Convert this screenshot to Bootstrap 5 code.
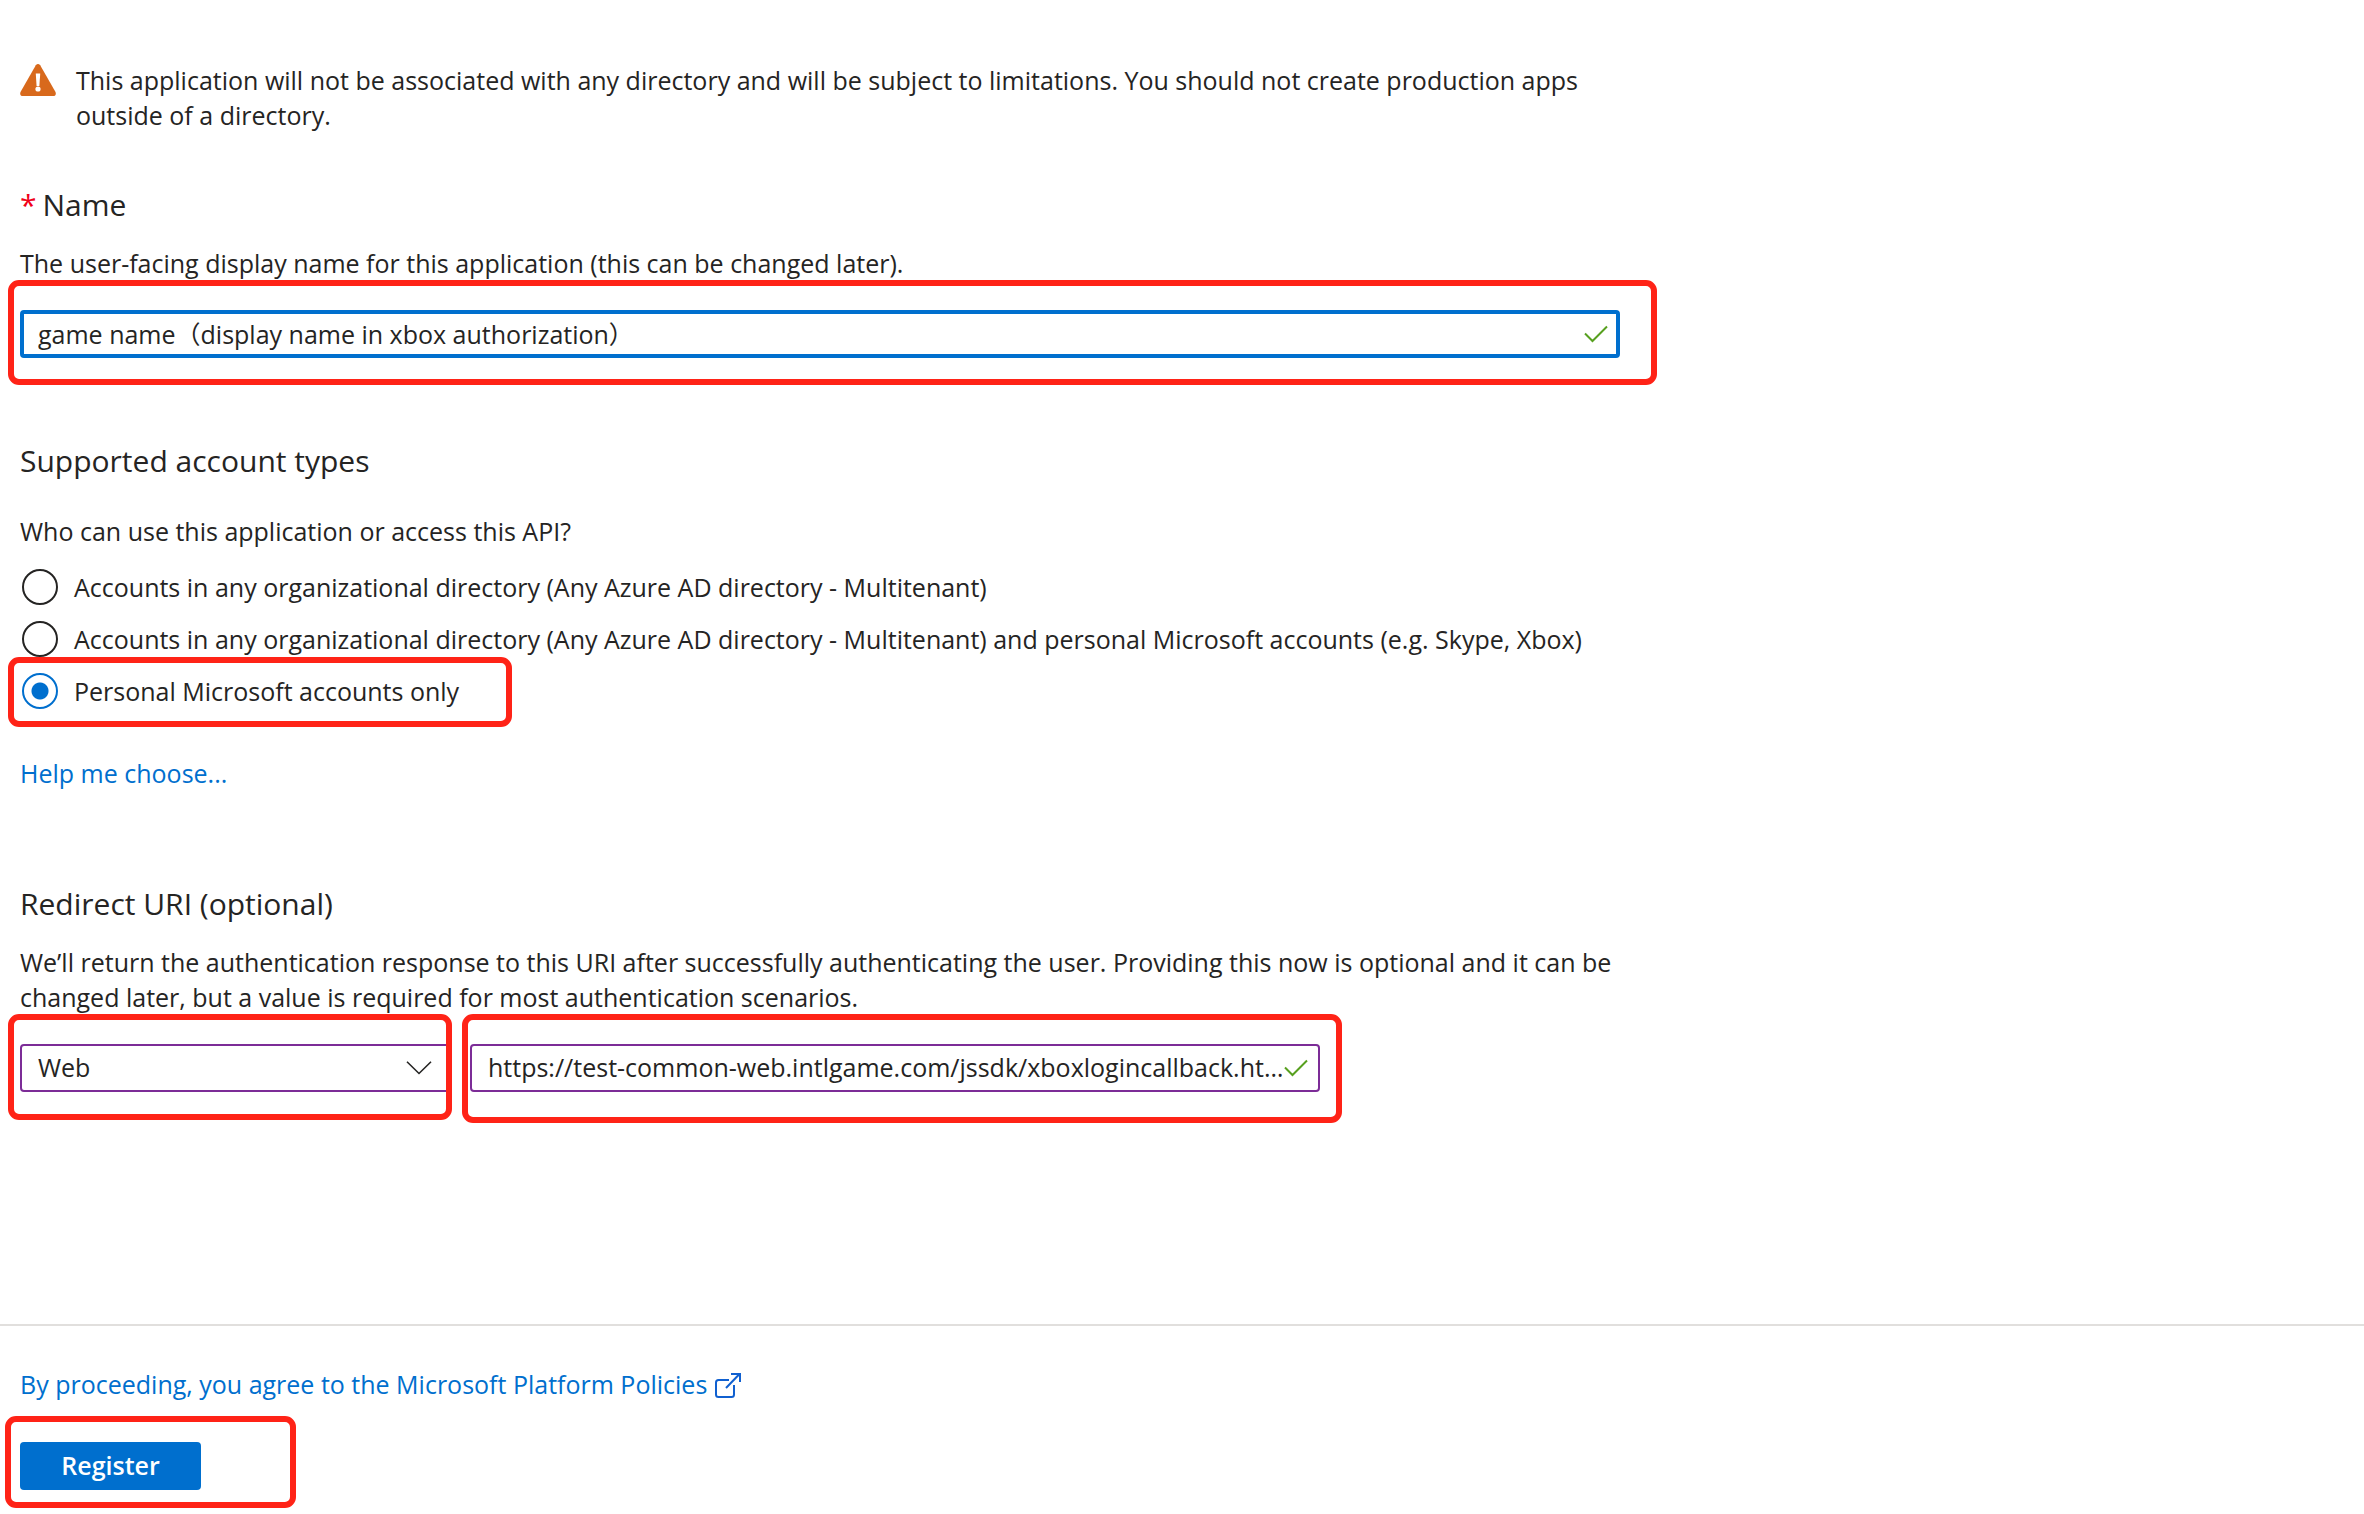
<!DOCTYPE html>
<html lang="en">
<head>
<meta charset="utf-8">
<meta name="viewport" content="width=device-width, initial-scale=1">
<title>Register an application</title>
<link href="https://cdn.jsdelivr.net/npm/bootstrap@5.3.0/dist/css/bootstrap.min.css" rel="stylesheet">
<style>
  :root {
    --ink: #252423;
    --azure: #006fce;
    --edited: #7c2c97;
    --callout: #ff2317;
  }
  body {
    font-family: "Open Sans", "Noto Sans CJK SC", sans-serif;
    font-size: 25px;
    line-height: 35px;
    color: var(--ink);
    background: #fff;
  }
  a { color: var(--azure); text-decoration: none; }
  a:hover { text-decoration: underline; }

  .reg-main { padding: 63px 20px 40px; }
  .reg-column { max-width: 1600px; }
  .notice { gap: 20px; margin-bottom: 52px; }
  .notice svg { margin-top: 1px; }

  .section-title {
    font-size: 30px;
    line-height: 40px;
    font-weight: 400;
    margin: 0 0 21px;
  }
  .section-title .star { color: #f00018; margin-right: 6px; }
  .title-wide { margin-bottom: 33px; }
  .hint { margin: 0 0 29px; }
  .name-field { margin-bottom: 83px; }

  /* text boxes and drop-down */
  .field-box {
    height: 48px;
    padding: 0 34px 2px 16px;
    font-size: 25px;
    line-height: 35px;
    color: var(--ink);
    background: #fff;
    border: 2px solid var(--edited);
    border-radius: 4px;
    text-overflow: ellipsis;
  }
  .field-box:focus { color: var(--ink); box-shadow: none; border-color: var(--azure); }
  .field-active { border: 4px solid var(--azure); padding-left: 14px; }
  .field-icon {
    position: absolute;
    top: 50%;
    right: 12px;
    transform: translateY(-50%);
    pointer-events: none;
  }
  .pick-type { width: 432px; }
  .pick-type .field-icon { right: 20px; }
  .pick-uri { width: 850px; }
  .uri-row { gap: 18px; }

  /* radio choices */
  .choices { margin: 12px 0 39px; }
  .choice { min-height: 52px; padding-left: 2px; gap: 16px; }
  .choice .form-check-input {
    float: none;
    flex: none;
    width: 36px;
    height: 36px;
    margin: 0;
    border: 2px solid var(--ink);
    background: #fff;
  }
  .choice .form-check-input:checked {
    border-color: var(--azure);
    background: radial-gradient(circle, var(--azure) 8px, #fff 9px);
  }
  .choice .form-check-input:focus { box-shadow: none; }
  .help { margin-bottom: 93px; }

  /* red call-out frames drawn over the form */
  .callout { position: relative; }
  .callout::after {
    content: "";
    position: absolute;
    border: 6px solid var(--callout);
    border-radius: 11px;
    pointer-events: none;
  }
  .callout-name::after { inset: -30px -37px -27px -12px; }
  .callout-choice::after { inset: -8px auto -10px -12px; width: 504px; }
  .callout-type::after { inset: -30px 0 -28px -12px; }
  .callout-uri::after { inset: -30px -22px -31px -8px; }
  .callout-submit::after { inset: -26px -95px -18px -15px; }

  .reg-footer { border-top: 2px solid #e1dfdd; padding: 41px 20px 24px; }
  .policy { gap: 8px; margin-bottom: 40px; }
  .btn-register {
    --bs-btn-color: #fff;
    --bs-btn-bg: var(--azure);
    --bs-btn-hover-color: #fff;
    --bs-btn-hover-bg: #005ba1;
    width: 181px;
    height: 48px;
    padding: 0 0 2px;
    border: 0;
    border-radius: 4px;
    font-size: 25px;
    line-height: 35px;
    font-weight: 600;
  }
</style>
</head>
<body>
<form class="d-flex flex-column min-vh-100">
  <main class="reg-main flex-grow-1">
    <div class="reg-column">
      <div class="notice d-flex align-items-start">
        <svg class="flex-shrink-0" width="36" height="32" viewBox="0 0 36 32" aria-hidden="true">
          <path d="M15.800 1.300Q18-1.300 20.200 1.300L35.500 28Q36.700 32 33 32H3Q-.7 32 .5 28Z" fill="#d8691c"/>
          <path d="M15.800 9.500h4.400l-.8 12.500h-2.800z" fill="#fff"/>
          <circle cx="18" cy="25" r="2.600" fill="#fff"/>
        </svg>
        <span>This application will not be associated with any directory and will be subject to limitations. You should not create production apps outside of a directory.</span>
      </div>

      <h2 class="section-title"><span class="star">*</span><label for="appName">Name</label></h2>
      <p class="hint">The user-facing display name for this application (this can be changed later).</p>
      <div class="name-field callout callout-name">
        <input type="text" id="appName" class="form-control field-box field-active" value="game name（display name in xbox authorization）">
        <svg class="field-icon" width="24" height="18" viewBox="0 0 24 18" fill="none" stroke="#57a01f" stroke-width="2" aria-hidden="true"><path d="M1 8.500 8.500 16 23 1.500"/></svg>
      </div>

      <h2 class="section-title title-wide">Supported account types</h2>
      <div id="whoCan">Who can use this application or access this API?</div>
      <div class="choices" role="radiogroup" aria-labelledby="whoCan">
        <div class="choice d-flex align-items-center">
          <input class="form-check-input" type="radio" name="accountType" id="typeOrg">
          <label for="typeOrg">Accounts in any organizational directory (Any Azure AD directory - Multitenant)</label>
        </div>
        <div class="choice d-flex align-items-center">
          <input class="form-check-input" type="radio" name="accountType" id="typeBoth">
          <label for="typeBoth">Accounts in any organizational directory (Any Azure AD directory - Multitenant) and personal Microsoft accounts (e.g. Skype, Xbox)</label>
        </div>
        <div class="choice d-flex align-items-center callout callout-choice">
          <input class="form-check-input" type="radio" name="accountType" id="typePersonal" checked>
          <label for="typePersonal">Personal Microsoft accounts only</label>
        </div>
      </div>
      <div class="help"><a href="#">Help me choose...</a></div>

      <h2 class="section-title">Redirect URI (optional)</h2>
      <p class="hint">We’ll return the authentication response to this URI after successfully authenticating the user. Providing this now is optional and it can be changed later, but a value is required for most authentication scenarios.</p>
      <div class="uri-row d-flex flex-wrap">
        <div class="pick-type callout callout-type">
          <select class="form-control field-box" id="platform" aria-label="Platform">
            <option selected>Web</option>
            <option>Single-page application</option>
            <option>Public client/native</option>
          </select>
          <svg class="field-icon" width="26" height="14" viewBox="0 0 26 14" fill="none" stroke="#252423" stroke-width="1.600" aria-hidden="true"><path d="M1 .7 13 12.500 25 .7"/></svg>
        </div>
        <div class="pick-uri callout callout-uri">
          <input type="text" id="redirectUri" class="form-control field-box" aria-label="Redirect URI" value="https://test-common-web.intlgame.com/jssdk/xboxlogincallback.html">
          <svg class="field-icon" width="24" height="18" viewBox="0 0 24 18" fill="none" stroke="#57a01f" stroke-width="2" aria-hidden="true"><path d="M1 8.500 8.500 16 23 1.500"/></svg>
        </div>
      </div>
    </div>
  </main>

  <footer class="reg-footer">
    <div class="policy d-flex align-items-center">
      <a href="#">By proceeding, you agree to the Microsoft Platform Policies</a>
      <svg width="26" height="26" viewBox="0 0 26 26" fill="none" stroke="#1060d0" stroke-width="2" aria-hidden="true"><path d="M14 8H3.500Q1 8 1 10.500V22.500Q1 25 3.500 25H16.500Q19 25 19 22.500V13"/><path d="M11 16 24.500 2M16 2H25V10"/></svg>
    </div>
    <div class="d-inline-block align-top callout callout-submit">
      <button type="submit" class="btn btn-register d-block">Register</button>
    </div>
  </footer>
</form>
<script src="https://cdn.jsdelivr.net/npm/bootstrap@5.3.0/dist/js/bootstrap.bundle.min.js"></script>
</body>
</html>
